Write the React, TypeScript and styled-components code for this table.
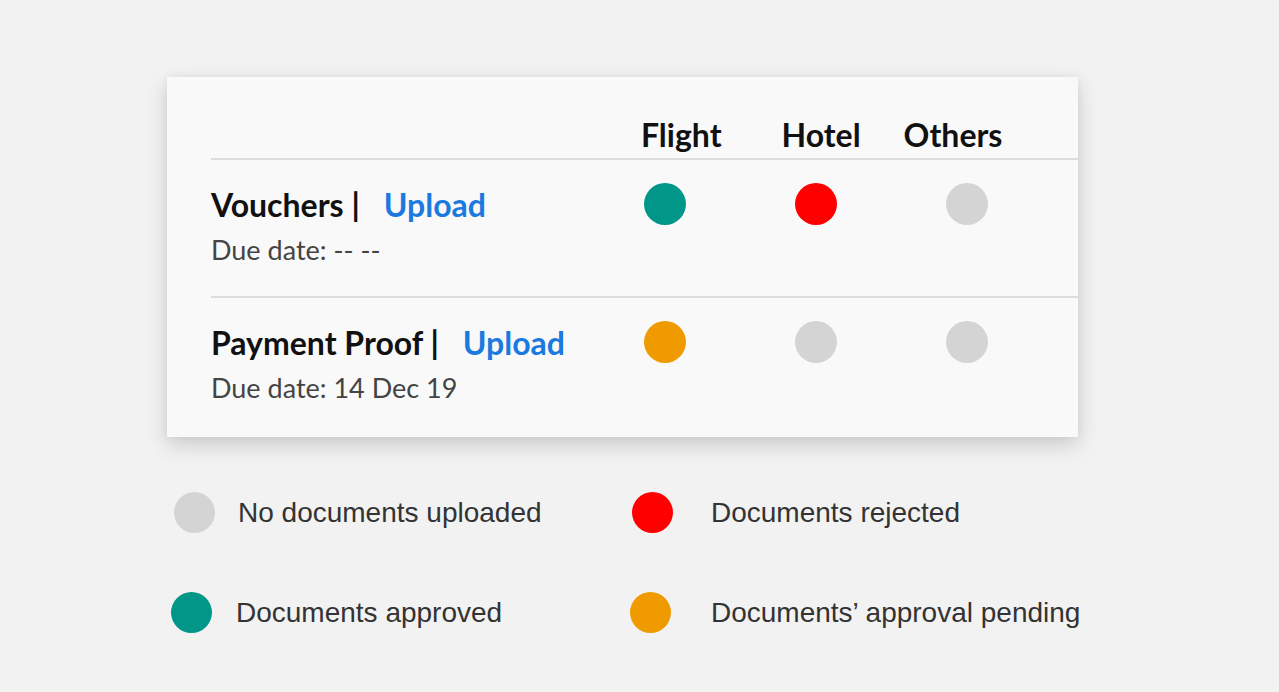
import React from "react";
import styled, { createGlobalStyle } from "styled-components";

const GlobalStyle = createGlobalStyle`
  html, body {
    margin: 0;
    padding: 0;
    background: #f2f2f2;
  }
  body {
    font-family: Lato, "Open Sans", sans-serif;
  }
`;

const Page = styled.div`
  width: 1279px;
  height: 692px;
  box-sizing: border-box;
  padding: 77px 0 0 167px;
  background: #f2f2f2;
`;

const Card = styled.section`
  width: 911px;
  height: 360px;
  box-sizing: border-box;
  padding-left: 44px;
  background: #f9f9f9;
  box-shadow: 0 8px 20px rgba(0, 0, 0, 0.16), 0 0 8px rgba(0, 0, 0, 0.05);
`;

const HeaderRow = styled.div`
  display: flex;
  align-items: flex-end;
  height: 83px;
  box-sizing: border-box;
  padding-bottom: 4px;
  border-bottom: 2px solid #dcdcdc;
`;

const HeaderCell = styled.div<{ $x: number }>`
  margin-left: ${(p) => p.$x}px;
  font-family: Lato, sans-serif;
  font-weight: 700;
  font-size: 32px;
  line-height: 1.2;
  color: #111;
`;

const Row = styled.div<{ $last?: boolean }>`
  display: grid;
  grid-template-columns: 378px 151px 151px 151px 1fr;
  align-items: start;
  box-sizing: border-box;
  height: ${(p) => (p.$last ? "139px" : "138px")};
  padding-top: 23px;
  border-bottom: ${(p) => (p.$last ? "none" : "2px solid #dcdcdc")};
`;

const Label = styled.div`
  display: flex;
  flex-direction: column;
`;

const Title = styled.div`
  display: flex;
  align-items: center;
  height: 42px;
  font-family: Lato, sans-serif;
  font-weight: 700;
  font-size: 32px;
  color: #111;
  white-space: nowrap;
`;

const UploadLink = styled.a`
  margin-left: 24px;
  color: #1b7ae0;
  text-decoration: none;
  cursor: pointer;
`;

const Due = styled.div`
  margin-top: 9px;
  font-family: Lato, sans-serif;
  font-size: 27px;
  line-height: 1.2;
  color: #444;
`;

const CellCenter = styled.div`
  display: flex;
  justify-content: center;
`;

const Dot = styled.span<{ $color: string; $size?: number }>`
  display: block;
  width: ${(p) => p.$size ?? 42}px;
  height: ${(p) => p.$size ?? 42}px;
  border-radius: 50%;
  background: ${(p) => p.$color};
`;

const Legend = styled.div`
  display: grid;
  grid-template-columns: 458px auto;
  row-gap: 59px;
  margin: 55px 0 0 5px;
`;

const LegendItem = styled.div<{ $gap: number; $shift?: number }>`
  display: flex;
  align-items: center;
  gap: ${(p) => p.$gap}px;
  margin-left: ${(p) => p.$shift ?? 0}px;
`;

const SwatchBox = styled.div`
  width: 44px;
  display: flex;
  justify-content: center;
`;

const LegendText = styled.span`
  font-family: "Liberation Sans", Arial, sans-serif;
  font-size: 28px;
  color: #333;
  white-space: nowrap;
`;

const COLORS = {
  none: "#d4d4d4",
  rejected: "#ff0000",
  approved: "#009688",
  pending: "#ef9b00",
};

type Status = keyof typeof COLORS;

const rows: { title: string; due: string; status: Status[] }[] = [
  { title: "Vouchers", due: "Due date: -- --", status: ["approved", "rejected", "none"] },
  { title: "Payment Proof", due: "Due date: 14 Dec 19", status: ["pending", "none", "none"] },
];

export default function App() {
  return (
    <Page>
      <GlobalStyle />
      <Card>
        <HeaderRow>
          <HeaderCell $x={430}>Flight</HeaderCell>
          <HeaderCell $x={60}>Hotel</HeaderCell>
          <HeaderCell $x={43}>Others</HeaderCell>
        </HeaderRow>
        {rows.map((r, i) => (
          <Row key={r.title} $last={i === rows.length - 1}>
            <Label>
              <Title>
                {r.title} |<UploadLink>Upload</UploadLink>
              </Title>
              <Due>{r.due}</Due>
            </Label>
            {r.status.map((s, j) => (
              <CellCenter key={j}>
                <Dot $color={COLORS[s]} />
              </CellCenter>
            ))}
          </Row>
        ))}
      </Card>
      <Legend>
        <LegendItem $gap={22}>
          <SwatchBox><Dot $color={COLORS.none} $size={41} /></SwatchBox>
          <LegendText>No documents uploaded</LegendText>
        </LegendItem>
        <LegendItem $gap={37}>
          <SwatchBox><Dot $color={COLORS.rejected} $size={41} /></SwatchBox>
          <LegendText>Documents rejected</LegendText>
        </LegendItem>
        <LegendItem $gap={23} $shift={-3}>
          <SwatchBox><Dot $color={COLORS.approved} $size={41} /></SwatchBox>
          <LegendText>Documents approved</LegendText>
        </LegendItem>
        <LegendItem $gap={39} $shift={-2}>
          <SwatchBox><Dot $color={COLORS.pending} $size={41} /></SwatchBox>
          <LegendText>Documents’ approval pending</LegendText>
        </LegendItem>
      </Legend>
    </Page>
  );
}
